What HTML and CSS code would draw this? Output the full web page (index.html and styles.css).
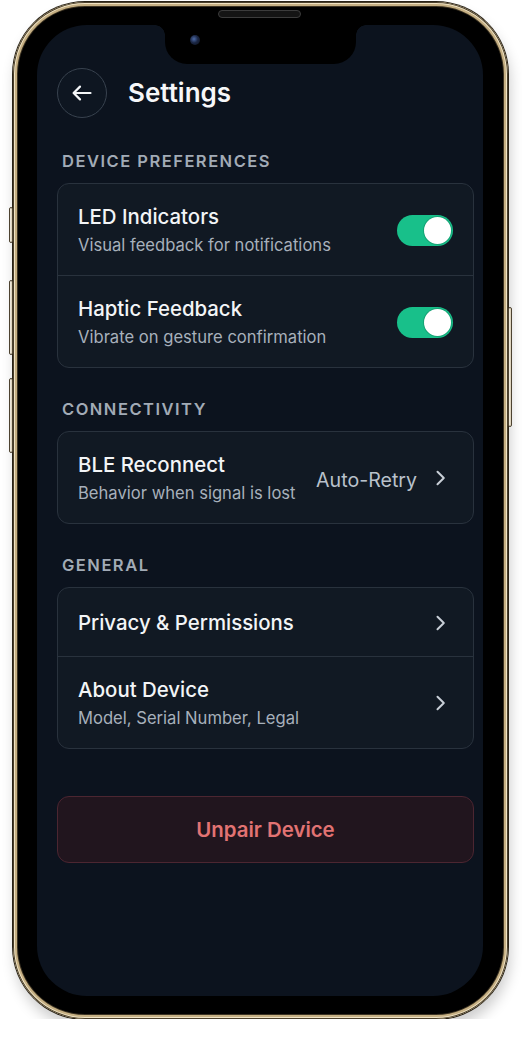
FILE: index.html
```html
<!DOCTYPE html>
<html lang="en">
<head>
  <meta charset="UTF-8">
  <title>Settings</title>
  <link rel="stylesheet" href="styles.css">
</head>
<body>
<div class="phone">
  <span class="btn btn-mute"></span>
  <span class="btn btn-vol-up"></span>
  <span class="btn btn-vol-down"></span>
  <span class="btn btn-power"></span>
  <span class="speaker"></span>

  <div class="screen">
    <div class="notch"><span class="camera"></span></div>

    <div class="header">
      <div class="back">
        <svg width="20" height="16" viewBox="0 0 20 16" fill="none" stroke="#f4f6f8" stroke-width="2.2" stroke-linecap="round" stroke-linejoin="round">
          <path d="M18.5 8H2"/>
          <path d="M8 1.6L1.6 8L8 14.4"/>
        </svg>
      </div>
      <h1 class="title">Settings</h1>
    </div>

    <div class="section">
      <div class="label">Device Preferences</div>
      <div class="card">
        <div class="row">
          <div class="text">
            <div class="name">LED Indicators</div>
            <div class="desc">Visual feedback for notifications</div>
          </div>
          <span class="toggle on"><span class="knob"></span></span>
        </div>
        <div class="row">
          <div class="text">
            <div class="name">Haptic Feedback</div>
            <div class="desc">Vibrate on gesture confirmation</div>
          </div>
          <span class="toggle on"><span class="knob"></span></span>
        </div>
      </div>
    </div>

    <div class="section">
      <div class="label">Connectivity</div>
      <div class="card">
        <div class="row">
          <div class="text">
            <div class="name">BLE Reconnect</div>
            <div class="desc">Behavior when signal is lost</div>
          </div>
          <span class="value">Auto-Retry</span>
          <svg class="chev" width="12" height="16" viewBox="0 0 12 16" fill="none" stroke="#c9cfd7" stroke-width="2" stroke-linecap="round" stroke-linejoin="round"><path d="M2.5 1.8L8.8 8L2.5 14.2"/></svg>
        </div>
      </div>
    </div>

    <div class="section">
      <div class="label">General</div>
      <div class="card">
        <div class="row single">
          <div class="text">
            <div class="name">Privacy &amp; Permissions</div>
          </div>
          <svg class="chev" width="12" height="16" viewBox="0 0 12 16" fill="none" stroke="#c9cfd7" stroke-width="2" stroke-linecap="round" stroke-linejoin="round"><path d="M2.5 1.8L8.8 8L2.5 14.2"/></svg>
        </div>
        <div class="row">
          <div class="text">
            <div class="name">About Device</div>
            <div class="desc">Model, Serial Number, Legal</div>
          </div>
          <svg class="chev" width="12" height="16" viewBox="0 0 12 16" fill="none" stroke="#c9cfd7" stroke-width="2" stroke-linecap="round" stroke-linejoin="round"><path d="M2.5 1.8L8.8 8L2.5 14.2"/></svg>
        </div>
      </div>
    </div>

    <div class="unpair">Unpair Device</div>
  </div>
</div>
</body>
</html>
```

FILE: styles.css
```css
* {
  box-sizing: border-box;
}

body {
  margin: 0;
  background: #fff;
  font-family: Inter, "Noto Sans", sans-serif;
}

.phone {
  position: relative;
  width: 495px;
  height: 1017px;
  margin: 2px 0 0 13px;
  padding: 23px 25px 23px 24px;
  background: #000;
  border-radius: 72px;
  box-shadow:
    inset 0 0 0 1px #4a3f2b,
    inset 0 0 0 2px #f0e3c4,
    inset 0 0 0 4px #c6b084,
    inset 0 0 0 5px #3b3222,
    0 0 0 1px #2a2419,
    2px 9px 14px rgba(0, 0, 0, 0.2);
}

.btn {
  position: absolute;
  width: 4px;
  background: linear-gradient(90deg, #f3efe6, #d8ccb2);
  border: 1px solid #4d4331;
  border-radius: 2px;
}

.btn-mute { left: -4px; top: 205px; height: 36px; }
.btn-vol-up { left: -4px; top: 278px; height: 75px; }
.btn-vol-down { left: -4px; top: 376px; height: 75px; }
.btn-power { right: -4px; top: 305px; height: 120px; }

.speaker {
  position: absolute;
  left: 205px;
  top: 8px;
  width: 83px;
  height: 8px;
  background: #141414;
  border: 1px solid #3c3c3c;
  border-radius: 4px;
  z-index: 3;
}

.screen {
  position: relative;
  height: 100%;
  padding: 43px 9px 0 20px;
  background: #0c131e;
  border-radius: 50px;
  overflow: hidden;
}

.notch {
  position: absolute;
  top: 0;
  left: 128px;
  width: 191px;
  height: 39px;
  background: #000;
  border-radius: 0 0 22px 22px;
}

.notch::before,
.notch::after {
  content: "";
  position: absolute;
  top: 0;
  width: 10px;
  height: 10px;
}

.notch::before {
  left: -10px;
  background: radial-gradient(circle at 0 100%, transparent 9.5px, #000 10px);
}

.notch::after {
  right: -10px;
  background: radial-gradient(circle at 100% 100%, transparent 9.5px, #000 10px);
}

.camera {
  position: absolute;
  left: 25px;
  top: 10px;
  width: 10px;
  height: 10px;
  border-radius: 50%;
  background: radial-gradient(circle at 40% 40%, #4c6aa8 0, #1b2744 45%, #0b0f18 100%);
}

.header {
  display: flex;
  align-items: center;
  gap: 21px;
}

.back {
  display: flex;
  align-items: center;
  justify-content: center;
  width: 50px;
  height: 50px;
  border: 1px solid #39434f;
  border-radius: 50%;
  background: #0e1621;
}

.title {
  margin: 0;
  color: #f6f7f9;
  font-size: 26px;
  line-height: 32px;
  font-weight: 600;
}

.section {
  margin-top: 31px;
}

.header + .section {
  margin-top: 33px;
}

.label {
  padding-left: 5px;
  margin-bottom: 12px;
  color: #a2abb6;
  font-size: 16.5px;
  line-height: 20px;
  font-weight: 600;
  letter-spacing: 1.5px;
  text-transform: uppercase;
}

.card {
  background: #111923;
  border: 1px solid #29323d;
  border-radius: 12px;
}

.row {
  display: flex;
  align-items: center;
  padding: 21px 20px 20px;
}

.row + .row {
  border-top: 1px solid #29323d;
}

.row.single {
  padding: 23px 20px 21px;
}

.text {
  flex: 1;
}

.name {
  color: #f3f5f7;
  font-size: 20.4px;
  line-height: 24px;
  font-weight: 500;
}

.desc {
  margin-top: 6px;
  color: #a7b0bb;
  font-size: 16.6px;
  line-height: 20px;
}

.value {
  margin-right: 18px;
  padding-top: 3px;
  color: #b9c1cb;
  font-size: 19.6px;
  line-height: 24px;
}

.chev {
  margin-right: 6px;
  flex: none;
}

.toggle {
  position: relative;
  flex: none;
  width: 56px;
  height: 31px;
  border-radius: 16px;
  background: #3a4450;
}

.toggle.on {
  background: #18c08a;
}

.knob {
  position: absolute;
  top: 2px;
  right: 2px;
  width: 27px;
  height: 27px;
  border-radius: 50%;
  background: #fff;
  box-shadow: 0 0 0 1px rgba(0, 0, 0, 0.15);
}

.unpair {
  margin-top: 47px;
  height: 67px;
  background: #21151e;
  border: 1px solid #4c2631;
  border-radius: 12px;
  color: #e27373;
  font-size: 20.4px;
  line-height: 65px;
  font-weight: 600;
  text-align: center;
}
```
